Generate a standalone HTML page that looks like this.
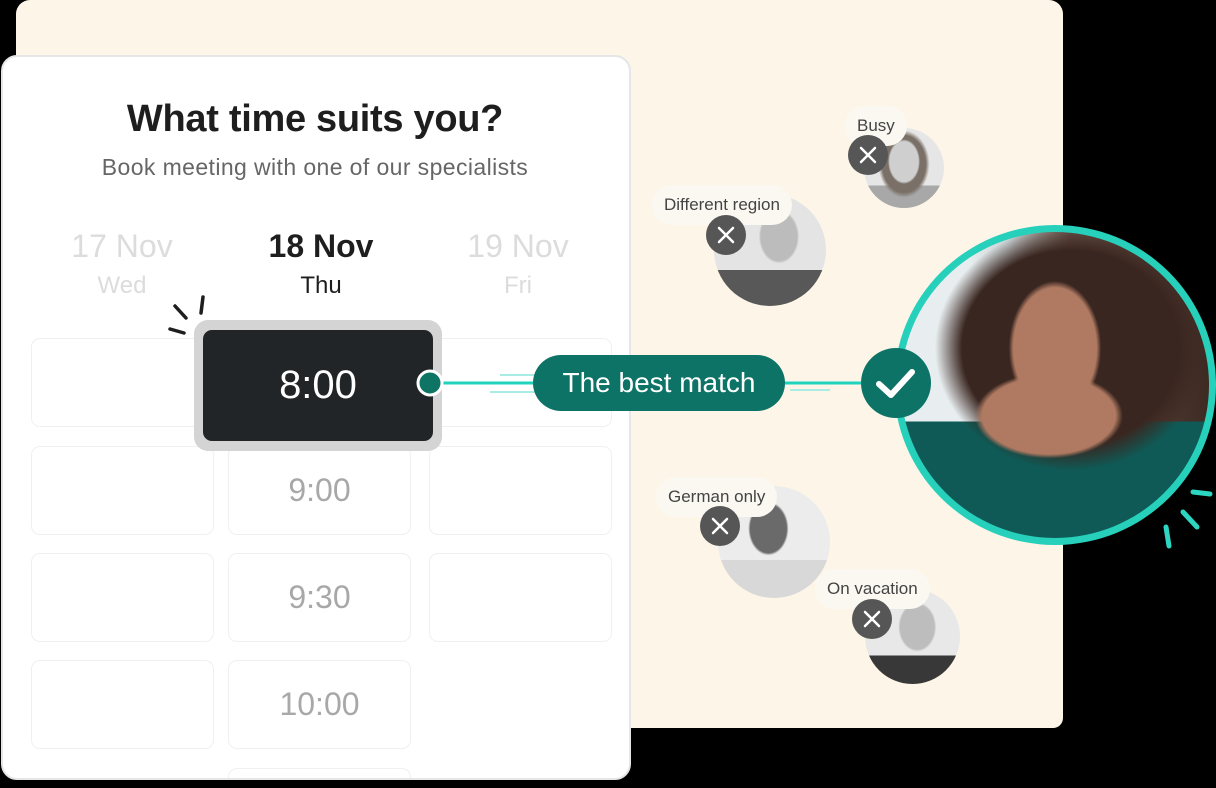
<!DOCTYPE html><html><head><style>
*{margin:0;padding:0;box-sizing:border-box}
body{width:1216px;height:788px;background:#000;position:relative;overflow:hidden;font-family:"Liberation Sans",sans-serif}
.a{position:absolute}
.cream{left:16px;top:0;width:1047px;height:728px;background:#fdf6e8;border-radius:14px 14px 10px 0}
.card{left:1px;top:55px;width:630px;height:725px;background:#fff;border:2px solid #e4e6e8;border-radius:16px}
.slot{position:absolute;width:183px;height:89px;border:1.5px solid #f0f0f0;border-radius:9px;background:#fff;color:#a8a8a8;font-size:32px;text-align:center;line-height:86px}
.c{text-align:center}
.lbl{position:absolute;background:#fbf8f2;border-radius:20px;color:#444;font-size:17px;height:40px;line-height:40px;padding:0 12px}
.av{position:absolute;border-radius:50%;overflow:hidden}
</style></head><body>
<div class="a cream"></div>
<div class="a card"></div>
<div class="a c" style="left:0;width:630px;top:98px;font-size:38px;font-weight:bold;color:#1e1e1e;letter-spacing:-0.3px">What time suits you?</div>
<div class="a c" style="left:0;width:630px;top:154px;font-size:23px;color:#666;letter-spacing:0.4px">Book meeting with one of our specialists</div>
<div class="a c" style="left:42px;width:160px;top:228px;font-size:32px;color:#dcdcdc">17 Nov</div>
<div class="a c" style="left:42px;width:160px;top:272px;font-size:24px;color:#dcdcdc">Wed</div>
<div class="a c" style="left:241px;width:160px;top:228px;font-size:32px;color:#1e1e1e;font-weight:bold">18 Nov</div>
<div class="a c" style="left:241px;width:160px;top:272px;font-size:24px;color:#1e1e1e">Thu</div>
<div class="a c" style="left:438px;width:160px;top:228px;font-size:32px;color:#dcdcdc">19 Nov</div>
<div class="a c" style="left:438px;width:160px;top:272px;font-size:24px;color:#dcdcdc">Fri</div>

<div class="slot" style="left:31px;top:338px"></div>
<div class="slot" style="left:429px;top:338px"></div>
<div class="slot" style="left:31px;top:446px"></div>
<div class="slot" style="left:228px;top:446px">9:00</div>
<div class="slot" style="left:429px;top:446px"></div>
<div class="slot" style="left:31px;top:553px"></div>
<div class="slot" style="left:228px;top:553px">9:30</div>
<div class="slot" style="left:429px;top:553px"></div>
<div class="slot" style="left:31px;top:660px"></div>
<div class="slot" style="left:228px;top:660px">10:00</div>
<div class="slot" style="left:228px;top:768px;height:10px;border-bottom:none;border-radius:9px 9px 0 0"></div>

<div class="a" style="left:194px;top:320px;width:248px;height:131px;background:#d4d4d4;border-radius:14px"></div>
<div class="a c" style="left:203px;top:330px;width:230px;height:111px;background:#222527;border-radius:9px;color:#fff;font-size:40px;line-height:111px">8:00</div>

<svg class="a" style="left:0;top:0" width="1216" height="788">
<g stroke="#1e1e1e" stroke-width="3.5" stroke-linecap="round">
<line x1="170" y1="329" x2="184" y2="333"/><line x1="175" y1="306" x2="186" y2="318"/><line x1="203" y1="297" x2="201" y2="313"/></g>
<line x1="441" y1="383" x2="540" y2="383" stroke="#1fd3bd" stroke-width="3"/>
<line x1="500" y1="375" x2="540" y2="375" stroke="#a8ece3" stroke-width="2"/>
<line x1="490" y1="392" x2="540" y2="392" stroke="#a8ece3" stroke-width="2"/>
<line x1="780" y1="383" x2="865" y2="383" stroke="#1fd3bd" stroke-width="3"/>
<line x1="790" y1="390" x2="830" y2="390" stroke="#a8ece3" stroke-width="2"/>
<circle cx="430" cy="383" r="12" fill="#0e7565" stroke="#fff" stroke-width="3"/>
<g stroke="#2dd6c0" stroke-width="5" stroke-linecap="round">
<line x1="1193" y1="492" x2="1210" y2="494"/><line x1="1183" y1="512" x2="1197" y2="527"/><line x1="1166" y1="527" x2="1169" y2="546"/></g>
</svg>
<div class="a c" style="left:533px;top:355px;width:252px;height:56px;border-radius:28px;background:#0c7366;color:#fff;font-size:28px;line-height:56px">The best match</div>

<div class="av" style="left:894px;top:225px;width:322px;height:320px;border:7px solid #27d0bb;background:radial-gradient(ellipse 15% 22% at 50% 38%,#b07a62 0 90%,transparent 100%),radial-gradient(ellipse 24% 14% at 48% 60%,#b07a62 0 90%,transparent 100%),radial-gradient(ellipse 44% 40% at 55% 38%,#3a2620 0 80%,transparent 100%),linear-gradient(180deg,transparent 0 62%,#0f5a56 62%),linear-gradient(90deg,#e8eef0 0 22%,#c9d2d4 35%,#6b5248 55%,#3d2a22)"></div>
<svg class="a" style="left:860px;top:347px" width="72" height="72"><circle cx="36" cy="36" r="35" fill="#0c7366"/><path d="M19 37 L31 48 L52 25" stroke="#fff" stroke-width="6" fill="none" stroke-linecap="round" stroke-linejoin="round"/></svg>

<div class="av" style="left:864px;top:128px;width:80px;height:80px;background:radial-gradient(ellipse 20% 28% at 50% 42%,#cfcfcf 0 90%,transparent 100%),radial-gradient(ellipse 32% 42% at 50% 45%,#7a7067 0 85%,transparent 100%),linear-gradient(180deg,#e6e6e6 0 72%,#a8a8a8 72%)"></div>
<div class="lbl" style="left:845px;top:106px">Busy</div>
<div class="av" style="left:714px;top:194px;width:112px;height:112px;background:radial-gradient(ellipse 18% 24% at 58% 38%,#bcbcbc 0 90%,transparent 100%),linear-gradient(180deg,#e4e4e4 0 68%,#585858 68%)"></div>
<div class="lbl" style="left:652px;top:185px">Different region</div>
<div class="av" style="left:718px;top:486px;width:112px;height:112px;background:radial-gradient(ellipse 18% 24% at 45% 38%,#6a6a6a 0 90%,transparent 100%),linear-gradient(180deg,#ececec 0 66%,#d8d8d8 66%)"></div>
<div class="lbl" style="left:656px;top:477px">German only</div>
<div class="av" style="left:865px;top:589px;width:95px;height:95px;background:radial-gradient(ellipse 20% 26% at 55% 40%,#bdbdbd 0 90%,transparent 100%),linear-gradient(180deg,#e8e8e8 0 70%,#383838 70%)"></div>
<div class="lbl" style="left:815px;top:569px">On vacation</div>

<svg class="a" style="left:0;top:0" width="1216" height="788"><g fill="#565656"><circle cx="868" cy="155" r="20"/><circle cx="726" cy="235" r="20"/><circle cx="720" cy="526" r="20"/><circle cx="872" cy="619" r="20"/></g>
<g stroke="#fff" stroke-width="2.5" stroke-linecap="round">
<path d="M861 148l14 14M875 148l-14 14"/><path d="M719 228l14 14M733 228l-14 14"/><path d="M713 519l14 14M727 519l-14 14"/><path d="M865 612l14 14M879 612l-14 14"/></g></svg>
</body></html>
